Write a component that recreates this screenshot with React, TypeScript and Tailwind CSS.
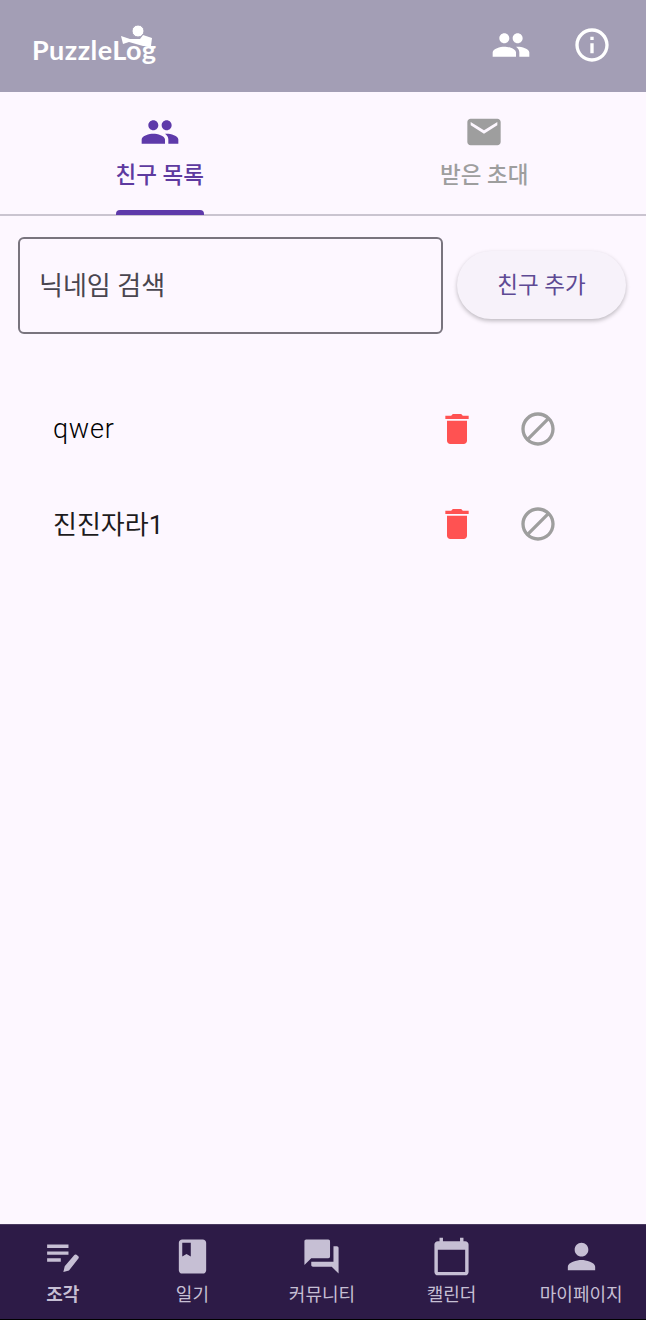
import React from "react";

const P = {
  people: "M16 11c1.66 0 2.99-1.34 2.99-3S17.66 5 16 5c-1.66 0-3 1.34-3 3s1.34 3 3 3zm-8 0c1.66 0 2.99-1.34 2.99-3S9.66 5 8 5C6.34 5 5 6.34 5 8s1.34 3 3 3zm0 2c-2.33 0-7 1.17-7 3.5V19h14v-2.5c0-2.33-4.67-3.5-7-3.5zm8 0c-.29 0-.62.02-.97.05 1.16.84 1.97 1.97 1.97 3.45V19h6v-2.5c0-2.33-4.67-3.5-7-3.5z",
  info: "M11 7h2v2h-2zm0 4h2v6h-2zm1-9C6.48 2 2 6.48 2 12s4.48 10 10 10 10-4.48 10-10S17.52 2 12 2zm0 18c-4.41 0-8-3.59-8-8s3.59-8 8-8 8 3.59 8 8-3.59 8-8 8z",
  mail: "M20 4H4c-1.1 0-1.99.9-1.99 2L2 18c0 1.1.9 2 2 2h16c1.1 0 2-.9 2-2V6c0-1.1-.9-2-2-2zm0 4l-8 5-8-5V6l8 5 8-5v2z",
  del: "M6 19c0 1.1.9 2 2 2h8c1.1 0 2-.9 2-2V7H6v12zM19 4h-3.5l-1-1h-5l-1 1H5v2h14V4z",
  block: "M12 2C6.48 2 2 6.48 2 12s4.48 10 10 10 10-4.48 10-10S17.52 2 12 2zM4 12c0-4.42 3.58-8 8-8 1.85 0 3.55.63 4.9 1.69L5.69 16.9C4.63 15.55 4 13.85 4 12zm8 8c-1.85 0-3.55-.63-4.9-1.69L18.31 7.1C19.37 8.45 20 10.15 20 12c0 4.42-3.58 8-8 8z",
  note: "M3 5h12.500v2H3zM3 9h12.500v2H3zM3 13h8v2H3zM13.300 17.700 12.500 21 15.800 20.200 21.300 13.200c.4-.5.3-1.100-.2-1.500l-.8-.6c-.5-.4-1.100-.3-1.500.2z",
  book: "M18 2H6c-1.1 0-2 .9-2 2v16c0 1.1.9 2 2 2h12c1.1 0 2-.9 2-2V4c0-1.1-.9-2-2-2zM6 4h5v8l-2.500-1.500L6 12V4z",
  forum: "M21 6h-2v9H6v2c0 .55.45 1 1 1h11l4 4V7c0-.55-.45-1-1-1zm-4 6V3c0-.55-.45-1-1-1H3c-.55 0-1 .45-1 1v14l4-4h10c.55 0 1-.45 1-1z",
  cal: "M20 3h-1V1h-2v2H7V1H5v2H4c-1.100 0-2 .9-2 2v16c0 1.100.9 2 2 2h16c1.100 0 2-.9 2-2V5c0-1.100-.9-2-2-2zm0 18H4V8h16v13z",
  person: "M12 12c2.210 0 4-1.790 4-4s-1.790-4-4-4-4 1.790-4 4 1.790 4 4 4zm0 2c-2.670 0-8 1.340-8 4v2h16v-2c0-2.660-5.330-4-8-4z",
};

function Icon({ d, className }: { d: string; className: string }) {
  return (
    <svg viewBox="0 0 24 24" fill="currentColor" fillRule="evenodd" className={className}>
      <path d={d} />
    </svg>
  );
}

function Logo() {
  return (
    <div className="relative w-[125px] h-[46px] flex items-center">
      <span className="font-['Lato','Noto_Sans',sans-serif] font-bold text-[27px] leading-none tracking-[0.45px] text-white pt-[6px]">
        PuzzleLog
      </span>
      <svg viewBox="0 0 40 44" className="absolute left-[86px] top-0 w-[40px] h-[44px]">
        <path d="M3 13 L12 16 L22 16 L25 12 L34 15 L33 23 L25 23 L11 19 L5 21 Z" fill="#ffffff" />
        <circle cx="20" cy="8" r="6" fill="#ffffff" stroke="#a39eb5" strokeWidth="1" />
      </svg>
    </div>
  );
}

function Friend({ name, textClass }: { name: string; textClass: string }) {
  return (
    <div className="h-[95px] flex items-center pl-[53px] pr-[88px]">
      <span className={`flex-1 leading-none pt-[2px] text-[#1d1b20] ${textClass}`}>{name}</span>
      <Icon d={P.del} className="w-[40px] h-[40px] text-[#ff5252]" />
      <Icon d={P.block} className="w-[40px] h-[40px] text-[#9e9e9e] ml-[41px]" />
    </div>
  );
}

function NavItem({ d, label, active }: { d: string; label: string; active?: boolean }) {
  return (
    <div className="flex-1 flex flex-col items-center pt-[11px] text-[#c6bfd4]">
      <Icon d={d} className="w-[41px] h-[41px]" />
      <span className={`text-[18px] leading-[24px] mt-[6px] whitespace-nowrap ${active ? "font-bold" : ""}`}>{label}</span>
    </div>
  );
}

export default function App() {
  return (
    <div className="w-[646px] h-[1320px] flex flex-col bg-[#fdf7ff] font-['Roboto','Noto_Sans_CJK_KR',sans-serif]">
      <header className="h-[92px] shrink-0 bg-[#a39eb5] flex items-center pl-[32px] pr-[34px]">
        <Logo />
        <div className="flex-1" />
        <Icon d={P.people} className="w-[40px] h-[40px] text-white -translate-y-[1px]" />
        <Icon d={P.info} className="w-[40px] h-[40px] text-white ml-[41px] -translate-y-[1px]" />
      </header>

      <nav className="h-[124px] shrink-0 flex border-b-[2px] border-[#cac4d0]">
        <div className="flex-1 flex flex-col items-center pt-[20px] pr-[5px] text-[#5e3aaa] relative">
          <Icon d={P.people} className="w-[40px] h-[40px]" />
          <span className="text-[22.5px] leading-[28px] mt-[9px] font-medium text-[#5e3aa0]">친구 목록</span>
          <div className="absolute bottom-[-1px] w-[88px] h-[5px] rounded-t-[4px] bg-[#5e3aaa]" />
        </div>
        <div className="flex-1 flex flex-col items-center pt-[20px] pr-[2px] text-[#9e9e9e]">
          <Icon d={P.mail} className="w-[40px] h-[40px]" />
          <span className="text-[22.5px] leading-[28px] mt-[9px] font-medium">받은 초대</span>
        </div>
      </nav>

      <section className="flex items-start pl-[18px] pr-[20px] pt-[21px]">
        <div className="w-[425px] h-[97px] border-[2px] border-[#79747e] rounded-[6px] flex items-center pl-[19px] pt-[2px] text-[26px] text-[#49454f]">
          닉네임 검색
        </div>
        <button className="ml-[14px] mt-[14px] w-[169px] h-[68px] pt-[2px] rounded-full bg-[#f7f2fa] text-[22.5px] text-[#5e4a94] shadow-[0_2px_4px_rgba(0,0,0,0.25)]">
          친구 추가
        </button>
      </section>

      <section className="pt-[47px] flex-1">
        <Friend name="qwer" textClass="text-[27px] font-light tracking-[0.8px] !text-black" />
        <Friend name="진진자라1" textClass="text-[26px]" />
      </section>

      <footer className="h-[96px] shrink-0 bg-[#2d1b47] border-t-[1px] border-[#4a3a60] border-b-[1px] border-b-black flex">
        <div className="flex-1 flex -ml-[2px]">
          <NavItem d={P.note} label="조각" active />
          <NavItem d={P.book} label="일기" />
          <NavItem d={P.forum} label="커뮤니티" />
          <NavItem d={P.cal} label="캘린더" />
          <NavItem d={P.person} label="마이페이지" />
        </div>
      </footer>
    </div>
  );
}
